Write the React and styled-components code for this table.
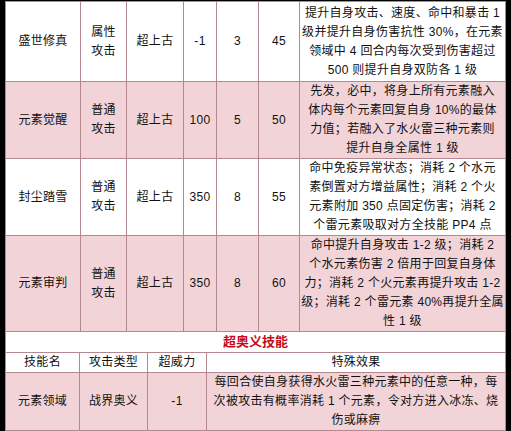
import React from 'react';
import styled, { createGlobalStyle } from 'styled-components';

const GlobalStyle = createGlobalStyle`
  html, body {
    margin: 0;
    padding: 0;
    background: #000;
  }
  body {
    font-family: "Liberation Sans", "Noto Sans CJK SC", sans-serif;
  }
`;

const Frame = styled.div`
  width: 511px;
  height: 431px;
  box-sizing: border-box;
  padding: 1px 6px 6px 5px;
  background: #000;
`;

const Sheet = styled.div`
  width: 500px;
  background: #fff;
`;

const Table = styled.table`
  width: 500px;
  border-collapse: collapse;
  table-layout: fixed;
  font-size: 12px;
  letter-spacing: 0.3px;
  color: #111;
`;

const Row = styled.tr`
  height: ${p => p.h}px;
  background: ${p => (p.pink ? '#f2d4d8' : '#fff')};
`;

const Cell = styled.td`
  border: 1px solid #b48890;
  padding: 0 1px;
  text-align: center;
  vertical-align: middle;
  line-height: 19px;
  white-space: ${p => (p.nowrap ? 'nowrap' : 'normal')};
`;

const SectionCell = styled.td`
  border: 1px solid #b48890;
  border-top: none;
  text-align: center;
  color: #c40d18;
  font-weight: bold;
  font-size: 13px;
  line-height: 18px;
  letter-spacing: 0;
`;

const skills = [
  {
    name: '盛世修真',
    type: ['属性', '攻击'],
    tier: '超上古',
    power: '-1',
    pp: '3',
    speed: '45',
    h: 80,
    pink: false,
    lines: [
      '提升自身攻击、速度、命中和暴击 1',
      '级并提升自身伤害抗性 30%，在元素',
      '领域中 4 回合内每次受到伤害超过',
      '500 则提升自身双防各 1 级',
    ],
  },
  {
    name: '元素觉醒',
    type: ['普通', '攻击'],
    tier: '超上古',
    power: '100',
    pp: '5',
    speed: '50',
    h: 76,
    pink: true,
    lines: [
      '先发，必中，将身上所有元素融入',
      '体内每个元素回复自身 10%的最体',
      '力值；若融入了水火雷三种元素则',
      '提升自身全属性 1 级',
    ],
  },
  {
    name: '封尘踏雪',
    type: ['普通', '攻击'],
    tier: '超上古',
    power: '350',
    pp: '8',
    speed: '55',
    h: 76,
    pink: false,
    lines: [
      '命中免疫异常状态；消耗 2 个水元',
      '素倒置对方增益属性；消耗 2 个火',
      '元素附加 350 点固定伤害；消耗 2',
      '个雷元素吸取对方全技能 PP4 点',
    ],
  },
  {
    name: '元素审判',
    type: ['普通', '攻击'],
    tier: '超上古',
    power: '350',
    pp: '8',
    speed: '60',
    h: 96,
    pink: true,
    lines: [
      '命中提升自身攻击 1-2 级；消耗 2',
      '个水元素伤害 2 倍用于回复自身体',
      '力；消耗 2 个火元素再提升攻击 1-2',
      '级；消耗 2 个雷元素 40%再提升全属',
      '性 1 级',
    ],
  },
];

const Lines = ({ lines }) =>
  lines.map((l, i) => (
    <React.Fragment key={i}>
      {l}
      {i < lines.length - 1 && <br />}
    </React.Fragment>
  ));

export default function App() {
  return (
    <>
      <GlobalStyle />
      <Frame>
        <Sheet>
          <Table>
            <colgroup>
              <col style={{ width: 75 }} />
              <col style={{ width: 46 }} />
              <col style={{ width: 57 }} />
              <col style={{ width: 33 }} />
              <col style={{ width: 42 }} />
              <col style={{ width: 41 }} />
              <col style={{ width: 206 }} />
            </colgroup>
            <tbody>
              {skills.map(s => (
                <Row key={s.name} h={s.h} pink={s.pink}>
                  <Cell>{s.name}</Cell>
                  <Cell>
                    <Lines lines={s.type} />
                  </Cell>
                  <Cell>{s.tier}</Cell>
                  <Cell>{s.power}</Cell>
                  <Cell>{s.pp}</Cell>
                  <Cell>{s.speed}</Cell>
                  <Cell nowrap>
                    <Lines lines={s.lines} />
                  </Cell>
                </Row>
              ))}
            </tbody>
          </Table>
          <Table>
            <colgroup>
              <col style={{ width: 74 }} />
              <col style={{ width: 68 }} />
              <col style={{ width: 59 }} />
              <col style={{ width: 299 }} />
            </colgroup>
            <tbody>
              <Row h={19}>
                <SectionCell colSpan={4}>超奥义技能</SectionCell>
              </Row>
              <Row h={19}>
                <Cell>技能名</Cell>
                <Cell>攻击类型</Cell>
                <Cell>超威力</Cell>
                <Cell>特殊效果</Cell>
              </Row>
              <Row h={57} pink>
                <Cell>元素领域</Cell>
                <Cell>战界奥义</Cell>
                <Cell>-1</Cell>
                <Cell nowrap>
                  <Lines
                    lines={[
                      '每回合使自身获得水火雷三种元素中的任意一种，每',
                      '次被攻击有概率消耗 1 个元素，令对方进入冰冻、烧',
                      '伤或麻痹',
                    ]}
                  />
                </Cell>
              </Row>
            </tbody>
          </Table>
        </Sheet>
      </Frame>
    </>
  );
}
